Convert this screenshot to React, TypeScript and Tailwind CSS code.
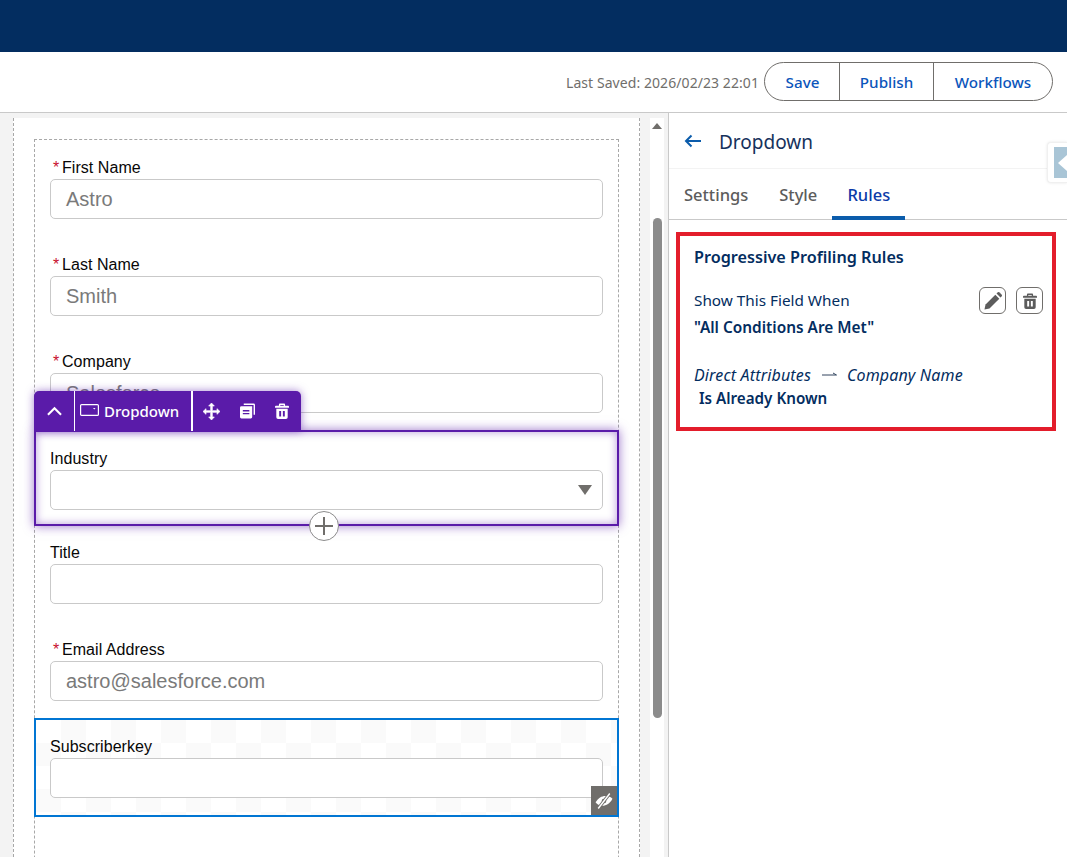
import React from "react";

const sans = "font-['Noto_Sans',sans-serif]";

function Trash({ className }: { className?: string }) {
  return (
    <svg viewBox="0 0 16 18" className={className} fill="currentColor">
      <path d="M5.500 0.500h5a1 1 0 0 1 1 1V3H15a1 1 0 0 1 1 1v1.200H0V4a1 1 0 0 1 1-1h3.500V1.500a1 1 0 0 1 1-1zM6 2v1h4V2z" />
      <path d="M1.500 6.500h13V16a2 2 0 0 1-2 2h-9a2 2 0 0 1-2-2zM4.800 9v6.200h2.200V9zm4.200 0v6.200h2.200V9z" />
    </svg>
  );
}

function Pencil({ className }: { className?: string }) {
  return (
    <svg viewBox="0 0 20 20" className={className} fill="currentColor">
      <path d="M0.500 19.500l1.200-5.600L12.600 3l4.400 4.400L6.100 18.300z" />
      <path d="M13.900 1.700l1.200-1.200a1.600 1.600 0 0 1 2.200 0l2.200 2.200a1.600 1.600 0 0 1 0 2.200l-1.200 1.200z" />
    </svg>
  );
}

function Field({
  label,
  value,
  required,
  select,
  className = "pt-4 pb-[17px]",
}: {
  label: string;
  value?: string;
  required?: boolean;
  select?: boolean;
  className?: string;
}) {
  return (
    <div className={`px-[15px] ${className}`}>
      <div className="h-6 pt-[2px] flex items-center text-[16px] tracking-[0.05px] text-[#080707] font-['Liberation_Sans',sans-serif]">
        {required && <span className="text-[#c8102e] w-[12px] pl-[3px] text-[16px]">*</span>}
        <span>{label}</span>
      </div>
      <div className="relative h-10 w-[553px] bg-white border border-[#c9c9c9] rounded-[5px] flex items-center pl-[15px] text-[20px] text-[#7a7a7a] font-['Liberation_Sans',sans-serif] overflow-hidden">
        {value}
        {select && (
          <svg viewBox="0 0 14 10" className="absolute right-[10px] top-[14px] w-[14px] h-[10px] text-[#706e6b]" fill="currentColor">
            <path d="M0 0h14L7 10z" />
          </svg>
        )}
      </div>
    </div>
  );
}

export default function App() {
  return (
    <div className={`w-[1067px] h-[857px] overflow-hidden bg-white flex flex-col ${sans}`}>
      <div className="h-[52px] shrink-0 bg-[#032d60]" />
      <div className="h-[61px] shrink-0 bg-white border-b border-[#c9c9c9] flex items-start justify-end pt-[10px] pr-[14px]">
        <span className="text-[14px] text-[#706e6b] leading-[41px] mr-[5px] tracking-[0.07px]">Last Saved: 2026/02/23 22:01</span>
        <div className="h-[39px] flex border border-[#706e6b] rounded-full text-[15.200px] font-medium text-[#0b55bb]">
          <div className="w-[74px] flex items-center justify-center pl-[1px] pt-[1px]">Save</div>
          <div className="w-[94px] flex items-center justify-center border-l border-[#706e6b] pt-[1px]">Publish</div>
          <div className="w-[119px] flex items-center justify-center border-l border-[#706e6b] pt-[1px]">Workflows</div>
        </div>
      </div>

      <div className="flex-1 flex min-h-0">
        {/* Canvas */}
        <div className="w-[668px] shrink-0 bg-[#f3f3f3] flex overflow-hidden">
          <div className="ml-[13px] w-[627px] mt-[5px] bg-white border-x border-dashed border-[#a8a8a8] pl-5 pt-[21px] shrink-0">
            <div className="w-[585px] h-[900px] border border-b-0 border-dashed border-[#a8a8a8] relative">
              <Field label="First Name" value="Astro" required className="pt-[15px] pb-[17px]" />
              <Field label="Last Name" value="Smith" required />
              <Field label="Company" value="Salesforce" required />
              <div className="relative -mx-px border-2 border-[#5a1ba9] shadow-[0_0_10px_rgba(90,27,169,0.6),inset_0_0_8px_rgba(90,27,169,0.45)] bg-white z-10">
                <Field label="Industry" select className="pl-[14px] pt-[14px] pb-[14px]" />
                <div className="absolute left-[-2px] top-[-41px] h-10 w-[267px] bg-[#5a1ba9] rounded-t-[5px] shadow-[0_0_8px_rgba(90,27,169,0.55)] flex items-center text-white">
                  <div className="w-[41px] h-full border-r border-white flex items-center justify-center">
                    <svg viewBox="0 0 16 10" className="w-[15px] h-[10px]" fill="none" stroke="currentColor" strokeWidth="2.200">
                      <path d="M1 9l7-7 7 7" />
                    </svg>
                  </div>
                  <div className="w-[118px] h-full border-r-2 border-white flex items-center pl-[5px] pt-[1px] text-[15px] font-medium gap-[5px]">
                    <svg viewBox="0 0 19 14" className="w-[19px] h-[14px] -mt-[3px]" fill="none" stroke="currentColor" strokeWidth="1.200">
                      <rect x="0.600" y="1.600" width="17.800" height="10.800" rx="1" />
                      <path d="M13 5h2.500l-1.200 1.400z" fill="currentColor" stroke="none" />
                    </svg>
                    Dropdown
                  </div>
                  <svg viewBox="0 0 18 18" className="ml-[10px] w-[17px] h-[17px]" fill="currentColor" stroke="currentColor" strokeWidth="0.700">
                    <path d="M9 0l3 3.200h-2.100v4.900h4.900V6L18 9l-3.200 3v-2.100H9.900v4.900H12L9 18l-3-3.200h2.100V9.900H3.200V12L0 9l3.200-3v2.100h4.900V3.200H6z" />
                  </svg>
                  <svg viewBox="0 0 16 16" className="ml-[20px] w-[15px] h-[16px]" fill="currentColor">
                    <path d="M4 0h10.500A1.500 1.500 0 0 1 16 1.500V12h-1.500V1.500H4z" />
                    <path fillRule="evenodd" d="M1.500 3H13v11.500a1.500 1.500 0 0 1-1.500 1.500h-10A1.500 1.500 0 0 1 0 14.500v-10A1.500 1.500 0 0 1 1.500 3zM3 7v1.400h7V7zm0 3v1.400h7V10z" />
                  </svg>
                  <Trash className="ml-[20px] w-[14px] h-[16px]" />
                </div>
                <div className="absolute left-[273px] bottom-[-17px] w-[30px] h-[30px] rounded-full bg-white border border-[#8c8c8c] flex items-center justify-center text-[#706e6b]">
                  <svg viewBox="0 0 18 18" className="w-[18px] h-[18px]" fill="none" stroke="currentColor" strokeWidth="2">
                    <path d="M9 0v18M0 9h18" />
                  </svg>
                </div>
              </div>
              <Field label="Title" className="pt-[14px] pb-[17px]" />
              <Field label="Email Address" value="astro@salesforce.com" required />
              <div className="relative -mx-px border-2 border-[#0176d3] bg-white bg-[conic-gradient(#fafafa_25%,#ffffff_0_50%,#fafafa_0_75%,#ffffff_0)] bg-size-[50px_46px]">
                <Field label="Subscriberkey" className="pl-[14px] pt-[14px] pb-[17px]" />
                <div className="absolute right-0 bottom-0 w-[26px] h-[29px] bg-[#706e6b] flex items-center justify-center">
                  <svg viewBox="0 0 20 18" className="w-[18px] h-[16px]">
                    <path d="M0.500 10.500C4 4.500 9 2.500 14 3.500c2 .4 4 1.500 5.500 3-3 6-8 8.500-13 7.800-2.300-.4-4.500-1.800-6-3.800z" fill="#ffffff" />
                    <circle cx="10" cy="9" r="2.600" fill="#706e6b" />
                    <path d="M16.500 0.500L3.500 17.500" stroke="#706e6b" strokeWidth="3.600" />
                    <path d="M16.500 0.500L3.500 17.500" stroke="#ffffff" strokeWidth="1.600" />
                  </svg>
                </div>
              </div>
            </div>
          </div>
          {/* scrollbar */}
          <div className="ml-[10px] w-[14px] bg-white flex flex-col items-center shrink-0 mt-[5px]">
            <svg viewBox="0 0 10 6" className="mt-[5px] w-[10px] h-[6px] text-[#706e6b]" fill="currentColor">
              <path d="M5 0l5 6H0z" />
            </svg>
            <div className="mt-[89px] w-[9px] h-[500px] rounded-full bg-[#8c8c8c]" />
          </div>
        </div>

        {/* Right panel */}
        <div className="flex-1 min-w-0 border-l border-[#c9c9c9] bg-white relative">
          <div className="h-[56px] border-b border-[#f3f3f3] flex items-center pl-[15px] pt-[3px] text-[#032d60]">
            <svg viewBox="0 0 18 14" className="w-[18px] h-[14px] text-[#0b5cab] -mt-[2px]" fill="none" stroke="currentColor" strokeWidth="2">
              <path d="M17 7H2M7.500 1.500L2 7l5.500 5.500" />
            </svg>
            <span className="ml-[17px] text-[19px] text-[#16325c]">Dropdown</span>
          </div>
          <div className="h-[51px] border-b border-[#c9c9c9] flex items-start text-[16.500px] font-medium text-[#5c5c5c] pl-[15px]">
            <div className="h-[50px] pt-[14px]">Settings</div>
            <div className="ml-[31px] h-[50px] pt-[14px]">Style</div>
            <div className="ml-[15px] w-[73px] h-[51px] pt-[14px] text-center border-b-4 border-[#0b5cab] text-[#0b3aa8]">Rules</div>
          </div>
          <div className="ml-[7px] mt-3 w-[380px] h-[199px] border-4 border-[#e31d2b] pl-[14px] pt-[9px] text-[#032d60] relative">
            <div className="text-[16.200px] font-semibold leading-6">Progressive Profiling Rules</div>
            <div className="mt-[21px] text-[15.300px] leading-5">Show This Field When</div>
            <div className="mt-[8px] text-[15.400px] font-semibold leading-5">"All Conditions Are Met"</div>
            <div className="mt-[27px] text-[16px] leading-5 italic flex items-center tracking-[0.15px]">
              <span>Direct Attributes</span>
              <svg viewBox="0 0 15 6" className="ml-[11px] mr-[10px] w-[15px] h-[6px] text-[#32455f]" fill="none" stroke="currentColor" strokeWidth="1">
                <path d="M0 3h14.500M11 1l3.500 2" />
              </svg>
              <span>Company Name</span>
            </div>
            <div className="mt-[3px] ml-[5px] text-[15.200px] font-semibold leading-5">Is Already Known</div>
            <div className="absolute top-[51px] right-[9px] flex gap-[10px] text-[#5c5c5c]">
              <div className="w-[27px] h-[27px] rounded-[6px] border border-[#706e6b] flex items-center justify-center">
                <Pencil className="w-[18px] h-[18px]" />
              </div>
              <div className="w-[27px] h-[27px] rounded-[6px] border border-[#706e6b] flex items-center justify-center">
                <Trash className="w-[14px] h-[16px]" />
              </div>
            </div>
          </div>
          <div className="absolute right-0 top-[29px] w-[20px] h-[41px] bg-white border border-r-0 border-[#f0f0f0] rounded-l-[4px] shadow-[0_0_3px_rgba(0,0,0,0.1)] flex items-center justify-end">
            <div className="w-[13px] h-[31px] bg-[#a9c5d6] flex items-center pl-[4px]">
              <div className="w-0 h-0 border-y-[8px] border-y-transparent border-r-[9px] border-r-white" />
            </div>
          </div>
        </div>
      </div>
    </div>
  );
}
